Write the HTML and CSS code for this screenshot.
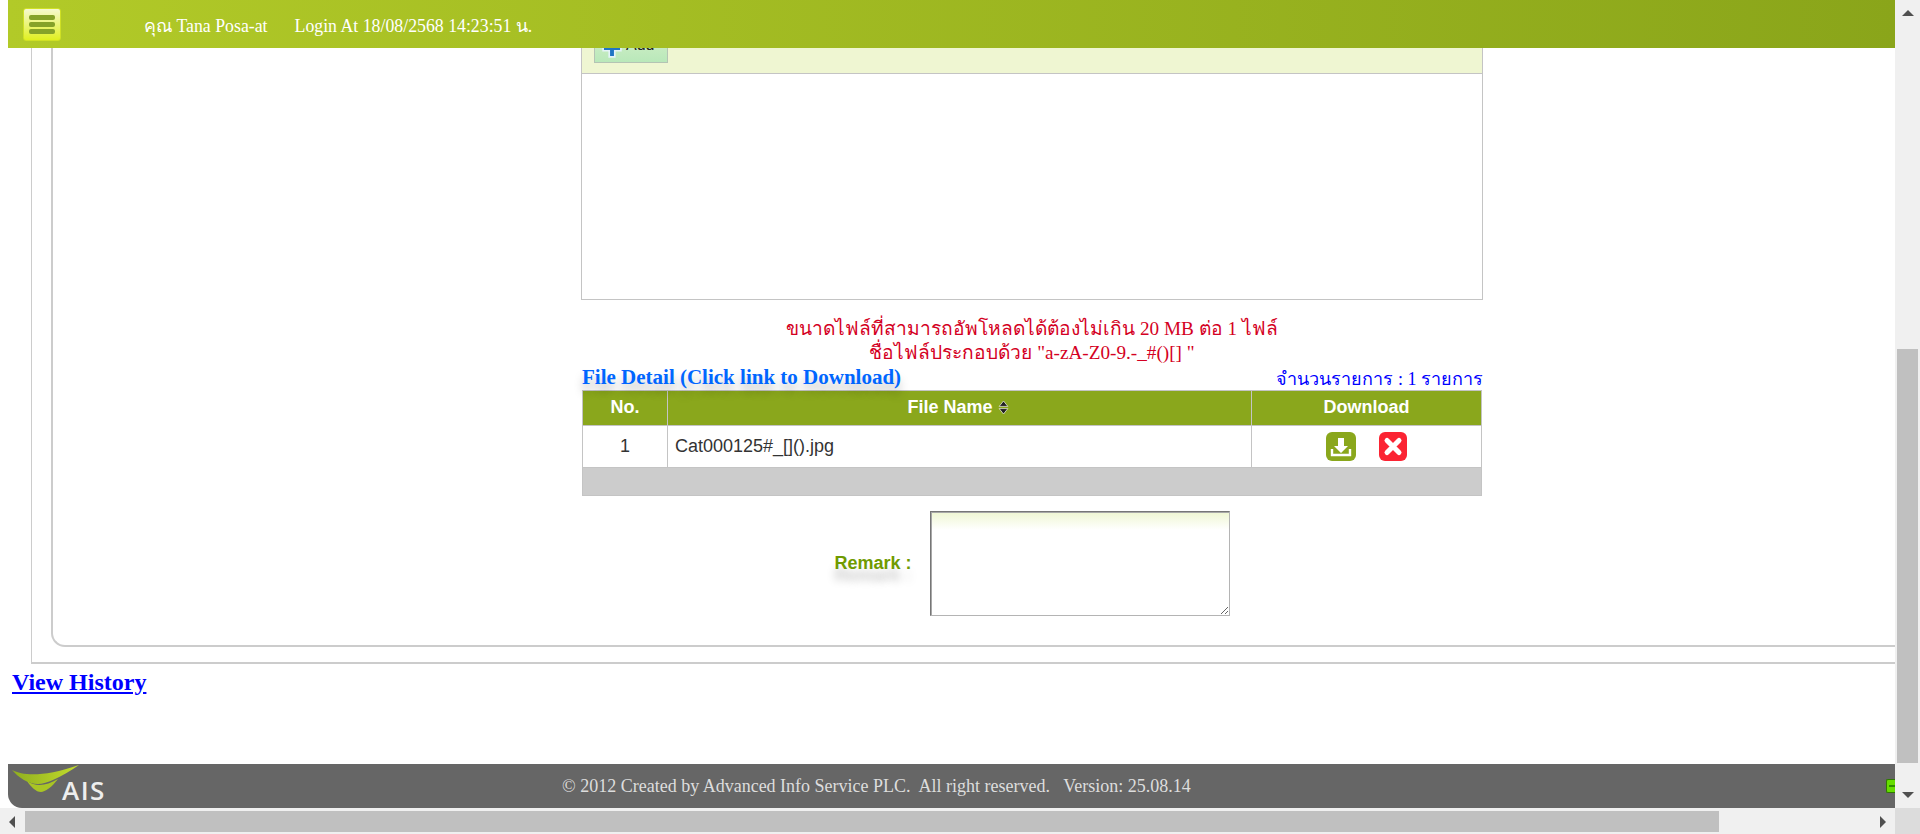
FILE: index.html
```html
<!DOCTYPE html>
<html lang="th">
<head>
  <meta charset="UTF-8">
  <title>AIS</title>
  <link rel="stylesheet" href="styles.css">
</head>
<body>
  <div class="window">
    <div class="page">
      <!-- top bar stays over the scrolled content -->
      <div class="topbar">
        <div class="menu-btn"><span></span><span></span><span></span></div>
        <span class="user">คุณ Tana Posa-at</span>
        <span class="login">Login At 18/08/2568 14:23:51 น.</span>
      </div>

      <div class="outer-box">
        <div class="inner-box">
          <div class="form-col">
            <div class="upload-panel">
              <div class="upload-bar">
                <button class="add-btn" type="button">
                  <svg width="20" height="20" viewBox="0 0 18 18"><path d="M6.500 1h5v5.500H17v5h-5.500V17h-5v-5.500H1v-5h5.500z" fill="#1f74c4" stroke="#e4f3f8" stroke-width="1.500"/></svg>
                  Add
                </button>
              </div>
              <div class="upload-list"></div>
            </div>

            <p class="file-note">ขนาดไฟล์ที่สามารถอัพโหลดได้ต้องไม่เกิน 20 MB ต่อ 1 ไฟล์<br>ชื่อไฟล์ประกอบด้วย "a-zA-Z0-9.-_#()[] "</p>

            <div class="table-title">
              <span class="title-left">File Detail (Click link to Download)</span>
              <span class="title-count">จำนวนรายการ : 1 รายการ</span>
            </div>

            <table class="file-table">
              <tr>
                <th class="col-no">No.</th>
                <th class="col-name">File Name
                  <svg class="sort" width="11" height="13" viewBox="0 0 10 12"><path d="M5 0l4 5H1zM5 12l4-5H1z" fill="#222" stroke="#fff" stroke-width=".6"/></svg>
                </th>
                <th class="col-dl">Download</th>
              </tr>
              <tr>
                <td class="center">1</td>
                <td>Cat000125#_[]().jpg</td>
                <td class="actions">
                  <svg width="30" height="29" viewBox="0 0 30 29"><rect width="30" height="29" rx="6" fill="#8aa71c"/><path d="M12 6h6v8h4l-7 7-7-7h4z" fill="#fff"/><path d="M6 17v6h18v-6" fill="none" stroke="#fff" stroke-width="2.400"/></svg>
                  <svg width="28" height="29" viewBox="0 0 28 29"><rect width="28" height="29" rx="6" fill="#fb2433"/><path d="M8 8.500l12 12M20 8.500l-12 12" stroke="#fff" stroke-width="5" stroke-linecap="round"/></svg>
                </td>
              </tr>
              <tr class="table-foot"><td colspan="3"></td></tr>
            </table>

            <div class="remark-row">
              <label class="remark-label" for="remark">Remark :</label>
              <textarea id="remark" class="remark-input"></textarea>
            </div>
          </div>
        </div>
      </div>

      <a class="history-link" href="#">View History</a>

      <div class="footer">
        <div class="logo">
          <svg width="68" height="28" viewBox="0 0 68 28">
            <defs>
              <linearGradient id="sw" x1="0" y1="0" x2="1" y2="0"><stop offset="0" stop-color="#8fae1e"/><stop offset="1" stop-color="#c3dc2c"/></linearGradient>
            </defs>
            <path d="M0 5C12 11 32 12 67 0 50 12 34 19 26 19 16 19 6 12 0 5z" fill="url(#sw)"/>
            <path d="M15 16C24 22 34 21 46 14 40 22 33 27 29 27 24 27 19 22 15 16z" fill="#a9c524"/>
          </svg>
          <span class="logo-text">AIS</span>
        </div>
        <span class="footer-text">© 2012 Created by Advanced Info Service PLC.&nbsp; All right reserved.&nbsp;&nbsp; Version: 25.08.14</span>
        <span class="status-dot"></span>
      </div>
    </div>

    <div class="vbar">
      <div class="arrow-up"></div>
      <div class="vbar-space"></div>
      <div class="vbar-thumb"></div>
      <div class="vbar-end"><div class="arrow-down"></div></div>
    </div>

    <div class="hbar">
      <div class="arrow-left"></div>
      <div class="hbar-thumb"></div>
      <div class="arrow-right"></div>
    </div>
    <div class="corner"></div>
  </div>
</body>
</html>
```

FILE: styles.css
```css
body {
  margin: 0;
  font-family: "Liberation Serif", "Noto Sans", serif;
  background: #ffffff;
}

.window {
  display: grid;
  grid-template-columns: 1fr 25px;
  grid-template-rows: 1fr 26px;
  width: 1920px;
  height: 834px;
  overflow: hidden;
}

/* content is stacked from the bottom so its top is cut off, like a scrolled page */
.page {
  position: relative;
  display: flex;
  flex-direction: column;
  justify-content: flex-end;
  overflow: hidden;
  min-height: 0;
}

.topbar {
  position: absolute;
  top: 0;
  left: 8px;
  right: 0;
  z-index: 5;
  height: 48px;
  display: flex;
  align-items: center;
  background: linear-gradient(to right, #b2ca28, #8aa51a);
  color: #ffffff;
  font-size: 17.800px;
}

.menu-btn {
  width: 38px;
  height: 33px;
  margin-left: 15px;
  box-sizing: border-box;
  padding: 6px 5px 0;
  border-radius: 3px;
  background: linear-gradient(to bottom, #f6f9d0, #e0f020);
  border: 1px solid #cfe024;
}

.menu-btn span {
  display: block;
  height: 5px;
  margin-bottom: 2px;
  border-radius: 2px;
  background: #86a229;
}

.user {
  margin-left: 83px;
  padding-top: 3px;
}

.login {
  margin-left: 27px;
  padding-top: 3px;
}

.outer-box {
  margin: 0 -40px 0 31px;
  padding: 0 0 15px 19px;
  border-left: 1px solid #cccccc;
  border-bottom: 2px solid #cccccc;
}

.inner-box {
  padding-bottom: 29px;
  border-left: 2px solid #cccccc;
  border-bottom: 2px solid #cccccc;
  border-bottom-left-radius: 14px;
}

.form-col {
  width: 902px;
  margin-left: 528px;
}

.upload-panel {
  border: 1px solid #c4c4c4;
}

.upload-bar {
  height: 60px;
  padding: 0 0 10px 12px;
  display: flex;
  align-items: flex-end;
  background: #eff6d2;
  border-bottom: 1px solid #c4c4c4;
}

.add-btn {
  display: flex;
  align-items: center;
  gap: 4px;
  width: 74px;
  height: 30px;
  padding: 0 0 6px 7px;
  font-family: "Liberation Sans", sans-serif;
  font-size: 16px;
  color: #222222;
  background: linear-gradient(to bottom, #d2efc8, #b9e8ba);
  border: 1px solid #b4c4b4;
}

.add-btn svg {
  margin-top: 6px;
}

.upload-list {
  height: 225px;
}

.file-note {
  margin: 17px 0 0;
  font-size: 19.200px;
  line-height: 24px;
  text-align: center;
  color: #d40023;
}

.table-title {
  display: flex;
  justify-content: space-between;
  align-items: flex-end;
  height: 25px;
  padding-left: 1px;
}

.title-left {
  font-size: 21px;
  font-weight: bold;
  color: #0066ff;
  text-shadow: 0 8px 10px rgba(0, 0, 0, 0.25);
}

.title-count {
  margin-bottom: -3px;
  font-size: 18px;
  color: #0000ff;
}

.file-table {
  width: 900px;
  margin-left: 1px;
  border-collapse: collapse;
  font-family: "Liberation Sans", sans-serif;
  font-size: 18px;
  color: #333333;
}

.file-table th {
  height: 32px;
  padding: 0 0 2px;
  background: #8aa71c;
  color: #ffffff;
  font-weight: bold;
  border: 1px solid #c4c4c4;
}

.file-table td {
  height: 41px;
  padding: 0 0 0 7px;
  border: 1px solid #c4c4c4;
}

.col-no {
  width: 84px;
}

.col-dl {
  width: 229px;
}

.file-table th.col-name {
  padding-right: 3px;
}

.sort {
  vertical-align: -1px;
}

.file-table td.center {
  padding: 0;
  text-align: center;
}

.file-table td.actions {
  padding: 0;
  text-align: center;
}

.actions svg {
  vertical-align: middle;
  margin: 0 9px;
}

.file-table .table-foot td {
  height: 27px;
  padding: 0;
  background: #cccccc;
}

.remark-row {
  display: flex;
  justify-content: center;
  align-items: center;
  gap: 18px;
  margin-top: 15px;
}

.remark-label {
  font-family: "Liberation Sans", sans-serif;
  font-size: 18px;
  font-weight: bold;
  color: #6f9a00;
  text-shadow: 0 12px 8px rgba(0, 0, 0, 0.22);
}

.remark-input {
  display: block;
  box-sizing: border-box;
  width: 300px;
  height: 105px;
  margin: 0;
  padding: 0;
  border: 1px solid;
  border-color: #767676 #b4b4b4 #b4b4b4 #767676;
  background: linear-gradient(to bottom, #eff6d2, #ffffff 18px) padding-box;
  box-shadow: inset 1px 1px 0 #a8a8a8;
}

.history-link {
  align-self: flex-start;
  margin: 5px 0 68px 12px;
  font-size: 24px;
  line-height: 27px;
  font-weight: bold;
  color: #0000ff;
}

.footer {
  position: relative;
  display: flex;
  align-items: center;
  height: 44px;
  margin-left: 8px;
  flex-shrink: 0;
  background: #666666;
  border-bottom-left-radius: 14px;
  color: #dddddd;
  font-size: 18px;
}

.logo {
  width: 100px;
  height: 44px;
  margin-left: 4px;
  position: relative;
}

.logo svg {
  display: block;
  margin-top: 1px;
}

.logo-text {
  position: absolute;
  left: 50px;
  top: 11px;
  font-family: "Open Sans", sans-serif;
  font-size: 26px;
  line-height: 30px;
  font-weight: 600;
  letter-spacing: 1.500px;
  color: #eeeeee;
}

.footer-text {
  margin-left: 450px;
}

.status-dot {
  position: absolute;
  right: 0;
  top: 15px;
  width: 8px;
  height: 12px;
  background: #66dd00;
  border: 1px solid #2f7a00;
  border-right: none;
  border-radius: 2px 0 0 2px;
}

.status-dot::after {
  content: "";
  display: block;
  width: 6px;
  height: 2px;
  margin: 5px 0 0 2px;
  background: #2f8a00;
}

.vbar {
  display: flex;
  flex-direction: column;
  align-items: center;
  background: #f0f0f0;
  min-height: 0;
}

.arrow-up {
  margin-top: 10px;
  border: 6px solid transparent;
  border-top: none;
  border-bottom: 6px solid #505050;
}

.vbar-space {
  flex: 1;
}

.vbar-thumb {
  width: 21px;
  height: 414px;
  background: #c0c0c0;
}

.vbar-end {
  height: 45px;
  display: flex;
  align-items: flex-end;
  padding-bottom: 10px;
  box-sizing: border-box;
}

.arrow-down {
  border: 6px solid transparent;
  border-bottom: none;
  border-top: 6px solid #505050;
}

.hbar {
  display: flex;
  align-items: center;
  background: #f0f0f0;
  padding-top: 1px;
}

.arrow-left {
  width: 0;
  margin-left: 9px;
  border: 6px solid transparent;
  border-left: none;
  border-right: 6px solid #505050;
}

.hbar-thumb {
  width: 1694px;
  height: 21px;
  margin-left: 10px;
  background: #c0c0c0;
}

.arrow-right {
  width: 0;
  margin-left: 161px;
  border: 6px solid transparent;
  border-right: none;
  border-left: 6px solid #505050;
}

.corner {
  background: #dcdcdc;
}
```
